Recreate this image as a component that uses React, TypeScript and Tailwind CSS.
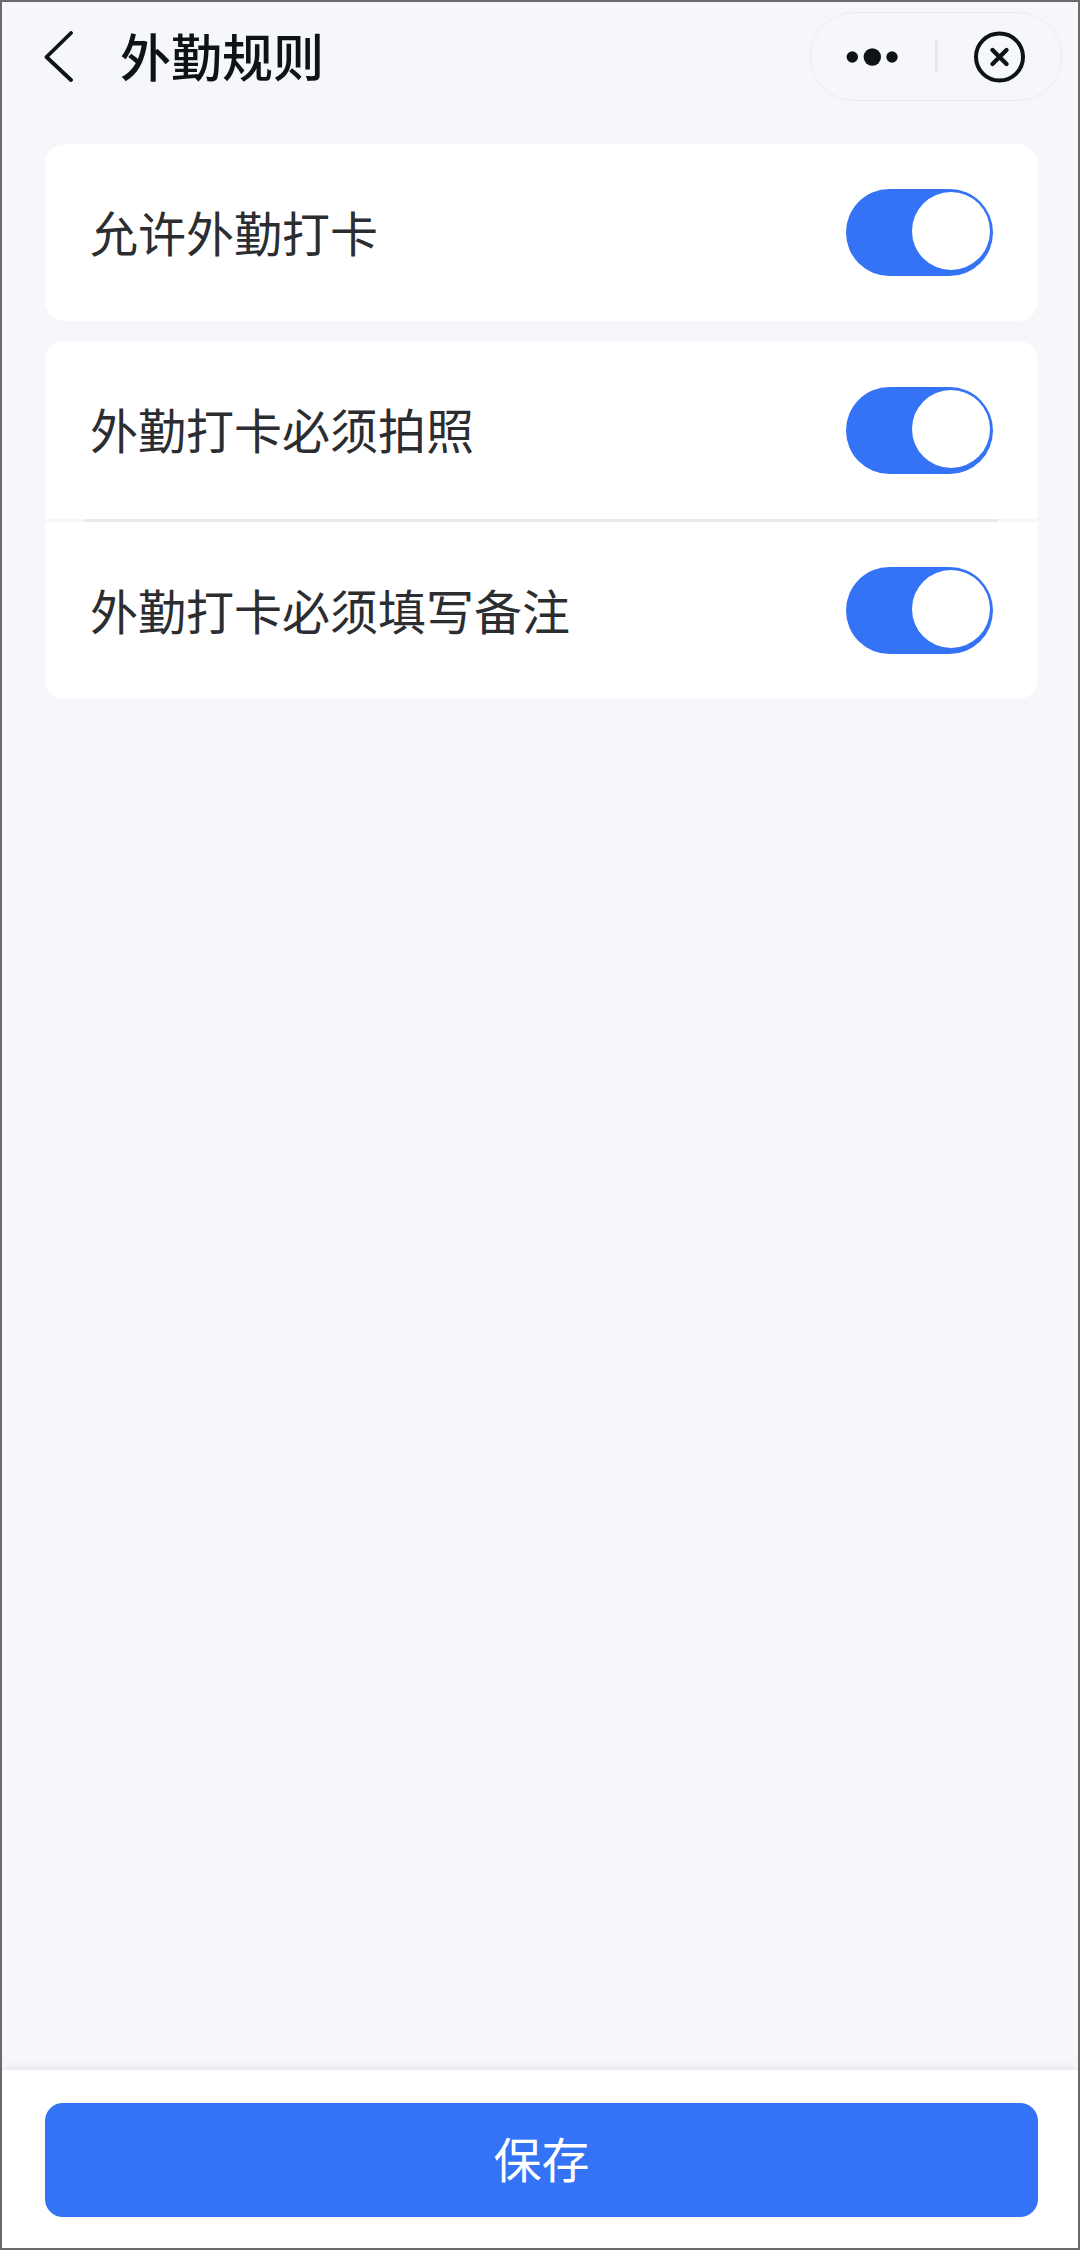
const fontStack = "font-['Noto_Sans_CJK_SC','Noto_Sans',sans-serif]";

function Toggle() {
  return (
    <div className="flex h-[87px] w-[147px] justify-end rounded-full bg-[#3473f5] pt-[3px] pr-[3px]">
      <div className="size-[78px] rounded-full bg-white" />
    </div>
  );
}

function Row({ label, height }: { label: string; height: string }) {
  return (
    <div className={`flex items-center justify-between pr-[45px] pl-[45px] ${height}`}>
      <span className="pb-[4px] text-[48px] leading-none text-[#2b2d31]">{label}</span>
      <Toggle />
    </div>
  );
}

function MenuCapsule() {
  return (
    <div className="flex h-[89px] w-[252px] items-center rounded-full border border-[#ebecf0]">
      <svg width="66" height="24" viewBox="0 0 66 24" className="ml-[32px]">
        <circle cx="9.3" cy="12" r="5.7" fill="#101316" />
        <circle cx="29.3" cy="12" r="8.7" fill="#101316" />
        <circle cx="49" cy="12" r="5.7" fill="#101316" />
      </svg>
      <div className="ml-[26px] h-[33px] w-[3px] bg-[#e9eaee]" />
      <svg width="54" height="54" viewBox="0 0 54 54" className="ml-[35px]">
        <circle cx="26.5" cy="27" r="23.5" fill="none" stroke="#101316" strokeWidth="4" />
        <path d="M19.5 20 L33.5 34 M33.5 20 L19.5 34" fill="none" stroke="#101316" strokeWidth="4.4" strokeLinecap="round" />
      </svg>
    </div>
  );
}

export default function App() {
  return (
    <div className={`flex h-[2250px] w-[1080px] flex-col border-2 border-[#6b6b6b] bg-[#f6f7fb] ${fontStack}`}>
      <header className="flex h-[142px] shrink-0 items-start justify-between pt-[10px] pr-[16px] pl-[42px]">
        <div className="flex h-[89px] items-center">
          <svg width="30" height="52" viewBox="0 0 30 52">
            <path d="M27 2 L2.5 26 L27 49" fill="none" stroke="#101316" strokeWidth="3.8" strokeLinecap="round" strokeLinejoin="round" />
          </svg>
          <h1 className="ml-[46px] pb-[3px] text-[51px] leading-none font-medium text-[#101316]">外勤规则</h1>
        </div>
        <MenuCapsule />
      </header>

      <main className="flex flex-1 flex-col gap-[20px] pr-[40px] pl-[43px]">
        <section className="rounded-[20px] bg-white">
          <Row label="允许外勤打卡" height="h-[177px]" />
        </section>
        <section className="rounded-[20px] bg-white">
          <Row label="外勤打卡必须拍照" height="h-[178px]" />
          <div className="h-[3px] bg-[#f6f7fb] px-[40px]">
            <div className="h-full bg-[#e8e9ed]" />
          </div>
          <Row label="外勤打卡必须填写备注" height="h-[177px]" />
        </section>
      </main>

      <footer className="h-[178px] shrink-0 bg-white pt-[33px] pr-[40px] pl-[43px] shadow-[0_-3px_8px_rgba(0,0,0,0.06)]">
        <button className="flex h-[114px] w-full items-center justify-center rounded-[18px] bg-[#3473f5] pb-[6px] text-[48px] leading-none text-white">
          保存
        </button>
      </footer>
    </div>
  );
}
